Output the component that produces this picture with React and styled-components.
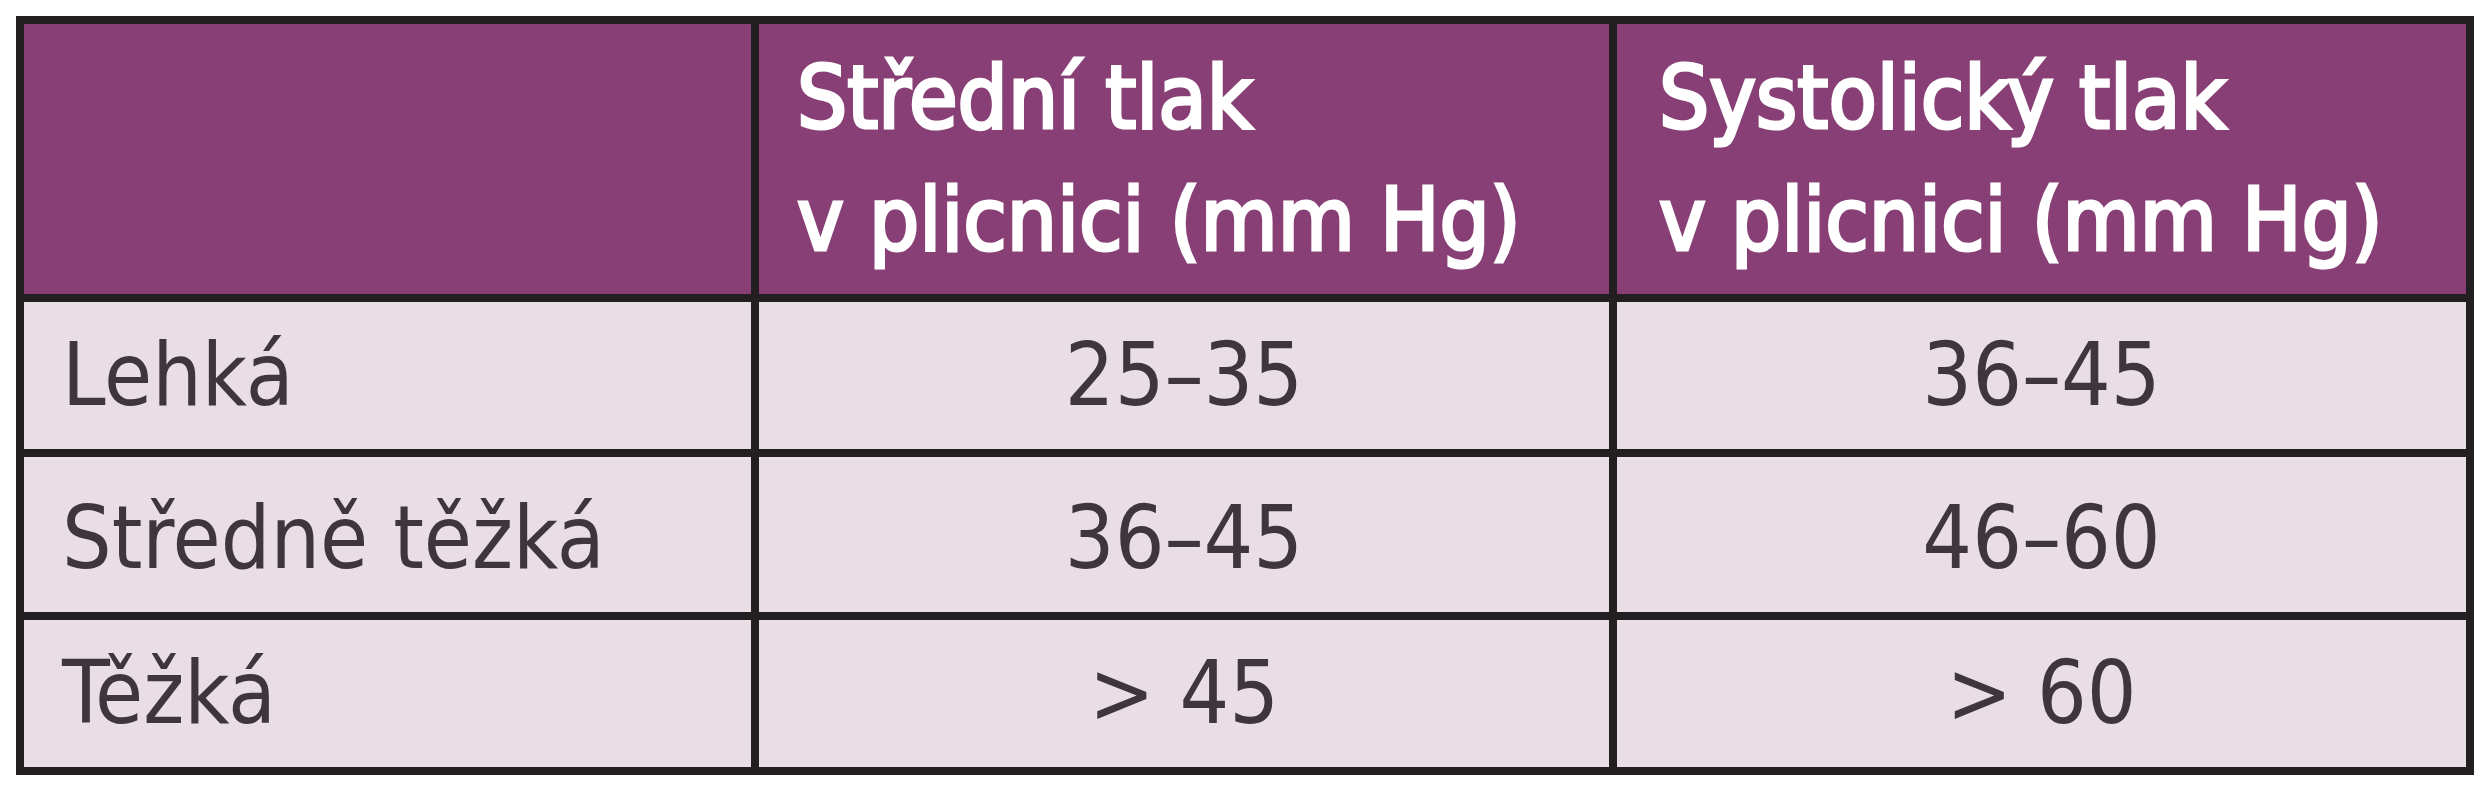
import React from "react";
import styled, { createGlobalStyle } from "styled-components";

const GlobalStyle = createGlobalStyle`
  html, body { margin: 0; padding: 0; background: #ffffff; }
  body {
    padding: 16px;
    font-family: "DejaVu Sans Condensed", "DejaVu Sans", sans-serif;
  }
`;

const Table = styled.div`
  display: grid;
  grid-template-columns: 727px 850px 849px;
  grid-template-rows: 270px 147px 155px 147px;
  gap: 8px;
  padding: 8px;
  width: max-content;
  background: #231f20;
`;

const HeadCell = styled.div`
  background: #873f75;
  color: #ffffff;
  display: flex;
  flex-direction: column;
  justify-content: center;
  padding: 0 0 0 ${(p) => p.$pad}px;
  font-size: 88px;
  line-height: 122px;
  white-space: nowrap;
  -webkit-text-stroke: 3.2px #ffffff;
`;

const Cell = styled.div`
  background: #e9dee6;
  color: #3d373b;
  display: flex;
  align-items: center;
  justify-content: ${(p) => (p.$center ? "center" : "flex-start")};
  padding: ${(p) => (p.$shift ? "8px" : "0")} 0 0 ${(p) => (p.$center ? "0" : "38px")};
  font-size: 87px;
  line-height: 1;
  white-space: nowrap;
`;

const rows = [
  { label: "Lehká", mean: "25–35", sys: "36–45", shift: false },
  { label: "Středně těžká", mean: "36–45", sys: "46–60", shift: true },
  { label: "Těžká", mean: "> 45", sys: "> 60", shift: false },
];

export default function App() {
  return (
    <>
      <GlobalStyle />
      <Table>
        <HeadCell $pad={38} />
        <HeadCell $pad={38}>
          <span>Střední tlak</span>
          <span>v plicnici (mm Hg)</span>
        </HeadCell>
        <HeadCell $pad={42}>
          <span>Systolický tlak</span>
          <span>v plicnici (mm Hg)</span>
        </HeadCell>
        {rows.map((r) => (
          <React.Fragment key={r.label}>
            <Cell $shift={r.shift}>{r.label}</Cell>
            <Cell $center $shift={r.shift}>{r.mean}</Cell>
            <Cell $center $shift={r.shift}>{r.sys}</Cell>
          </React.Fragment>
        ))}
      </Table>
    </>
  );
}
